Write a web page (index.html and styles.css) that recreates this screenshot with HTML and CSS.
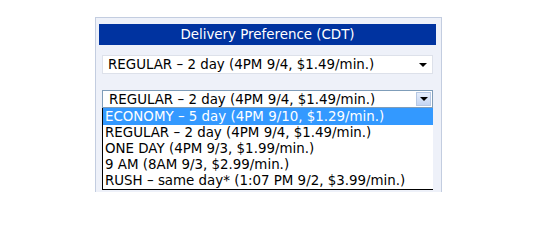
FILE: index.html
```html
<!DOCTYPE html>
<html>
<head>
<meta charset="utf-8">
<link rel="stylesheet" href="styles.css">
</head>
<body>
<div class="panel">
  <div class="header">Delivery Preference (CDT)</div>
  <div class="select closed">
    <span class="value">REGULAR – 2 day (4PM 9/4, $1.49/min.)</span>
    <span class="arrow"></span>
  </div>
  <div class="select open">
    <span class="value">REGULAR – 2 day (4PM 9/4, $1.49/min.)</span>
    <span class="button"><span class="arrow"></span></span>
  </div>
  <ul class="list">
    <li class="selected">ECONOMY – 5 day (4PM 9/10, $1.29/min.)</li>
    <li>REGULAR – 2 day (4PM 9/4, $1.49/min.)</li>
    <li>ONE DAY (4PM 9/3, $1.99/min.)</li>
    <li>9 AM (8AM 9/3, $2.99/min.)</li>
    <li>RUSH – same day* (1:07 PM 9/2, $3.99/min.)</li>
  </ul>
</div>
</body>
</html>
```

FILE: styles.css
```css
html, body {
  margin: 0;
  padding: 0;
  background: #ffffff;
}
body {
  font-family: "DejaVu Sans", Verdana, sans-serif;
  font-size: 13.4px;
  color: #000;
}
.panel {
  margin: 17px 0 0 95px;
  width: 345px;
  border: 1px solid #c3cde0;
  border-bottom: none;
  background: #eef1f9;
  padding: 6px 0 2px 0;
}
.header {
  margin: 0 5px 0 3px;
  height: 21px;
  line-height: 21px;
  background: #0033a0;
  color: #fff;
  text-align: center;
}
.select {
  margin: 10px 0 0 6px;
  width: 331px;
  box-sizing: border-box;
  background: #fff;
  display: flex;
  align-items: center;
  justify-content: space-between;
}
.closed {
  height: 19px;
  border: 1px solid #dde1ea;
  padding: 0 5px 0 5px;
}
.open {
  margin-top: 16px;
  height: 18px;
  border: 1px solid #7f9db9;
  padding: 0 0 0 6px;
}
.value {
  white-space: nowrap;
}
.arrow {
  width: 0;
  height: 0;
  border-left: 4px solid transparent;
  border-right: 4px solid transparent;
  border-top: 4px solid #000;
}
.button {
  align-self: stretch;
  width: 15px;
  margin: 1px;
  box-sizing: border-box;
  border: 1px solid #b6c8e4;
  background: linear-gradient(#e6eefc, #c4d5f3);
  display: flex;
  align-items: center;
  justify-content: center;
}
.list {
  list-style: none;
  margin: 0 0 0 6px;
  padding: 0;
  width: 331px;
  box-sizing: border-box;
  background: #fff;
  border-left: 1px solid #000;
  border-bottom: 1px solid #000;
}
.list li {
  height: 16px;
  line-height: 16px;
  padding-left: 2px;
  white-space: nowrap;
}
.list li.selected {
  height: 17px;
  line-height: 17px;
  background: #3399ff;
  color: #fff;
}
```
